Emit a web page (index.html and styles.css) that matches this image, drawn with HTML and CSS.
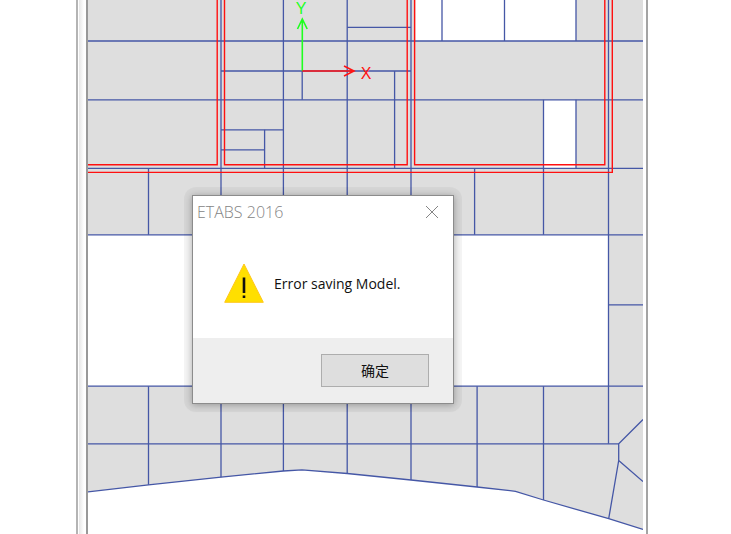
FILE: index.html
```html
<!DOCTYPE html>
<html lang="zh-CN">
<head>
<meta charset="UTF-8" />
<meta name="viewport" content="width=device-width, initial-scale=1" />
<title>ETABS 2016</title>
<link rel="stylesheet" href="styles.css">
</head>
<body>
<main class="workspace">
  <div class="splitter"></div>
  <section class="plan-view">
    <svg class="plan" viewBox="88 0 555 534" preserveAspectRatio="xMidYMin slice" aria-label="Plan view">
      <!-- slab -->
      <path class="slab" d="M88 0H643V529.5L608.7 518.7L543.5 500L515.5 491.3L477 487L411 480L347.2 473.5L302 469.8L283.3 471L221 477.2L148.5 484.8L88 491.8Z" />
      <!-- openings -->
      <path class="opening" d="M415.5 0H576V41H415.5ZM543.5 100H576V168.5H543.5ZM88 234.8H608.5V386H88Z" />
      <!-- beams -->
      <g class="beams">
        <path d="M88 41H643M88 99.8H643M88 168.4H643M88 234.8H643M88 386.2H643M88 443.8H618.7M608.5 304.8H643" />
        <path d="M347.2 27.3H411M221 71H411M221 129.8H283.3M221 149.8H264.6" />
        <path d="M221 0V234.8M283.4 0V234.8M347.2 0V234.8M411 0V234.8M608.5 0V443.8" />
        <path d="M442 0V41M504.5 0V41M576 0V41M576 99.8V168.4M543.5 99.8V234.8M302.2 71V99.8M394.6 71V168.4M264.6 129.8V168.4M148.5 168.4V234.8M474.6 168.4V234.8" />
        <path d="M148.5 386.2V484.8M221 386.2V477.2M283.4 386.2V471M347.2 386.2V473.5M411 386.2V480M477.1 386.2V487M543.5 386.2V500" />
        <path d="M88 491.8L148.5 484.8L221 477.2L283.3 471L302 469.8L347.2 473.5L411 480L477 487L515.5 491.3L543.5 500L608.7 518.7L643 529.5" />
        <path d="M643 419.5L618.7 443.8V460.5L608.7 518.7M618.7 460.5L643 481.5" />
      </g>
      <!-- walls -->
      <path class="walls" d="M88 164.8H217.2V0M224.5 0V164.8H407.2V0M414.6 0V164.8H604.8V0M88 172.4H612.3V0" />
      <!-- axes -->
      <g class="axis axis-y">
        <path d="M302.3 71V20M297.5 29L302.3 19L307.2 29" />
        <text x="301" y="14">Y</text>
      </g>
      <g class="axis axis-x">
        <path d="M302.3 71H353M344 66L354 71L344 76" />
        <text x="366" y="79">X</text>
      </g>
    </svg>

    <div class="dialog-shadow">
      <div class="dialog" role="alertdialog" aria-labelledby="dialog-title" aria-describedby="dialog-text">
        <header class="dialog-header">
          <span id="dialog-title">ETABS 2016</span>
          <button class="close-btn" type="button" aria-label="Close">
            <svg width="14" height="14" viewBox="0 0 14 14"><path d="M1 1L13 13M13 1L1 13" /></svg>
          </button>
        </header>
        <div class="dialog-body">
          <svg class="warning-icon" width="40" height="40" viewBox="0 0 40 40">
            <path class="warning-sign" d="M20 1L39.3 39.3H.7Z" />
            <path class="warning-mark" d="M18.7 14.5H21.3V30H18.7ZM18.7 32.5H21.3V35H18.7Z" />
          </svg>
          <p id="dialog-text">Error saving Model.</p>
        </div>
        <footer class="dialog-footer">
          <button class="ok-btn" type="button">确定</button>
        </footer>
      </div>
    </div>
  </section>
</main>
</body>
</html>
```

FILE: styles.css
```css
* { box-sizing: border-box; }

body {
  margin: 0;
  background: #fff;
  font-family: "Open Sans", "Noto Sans", "Noto Sans CJK SC", sans-serif;
}

.workspace {
  display: flex;
  height: 100vh;
  padding: 0 83px 0 76px;
  overflow: hidden;
}

.splitter {
  width: 10px;
  border-left: 2px solid #b4b4b4;
  background: linear-gradient(to right, #fff 1px, #e6e6e6 1px, #fff 6px);
}

.plan-view {
  flex: 1;
  position: relative;
  padding-right: 3px;
  border-left: 2px solid #999;
  border-right: 2px solid #a4a4a4;
}

/* drawing */
.plan { display: block; width: 100%; height: 100%; }
.slab { fill: #dedede; }
.opening { fill: #fff; }
.beams, .walls, .axis path { fill: none; }
.beams { stroke: #4557a6; stroke-width: 1.3; }
.walls { stroke: #ff1010; stroke-width: 1.4; }
.axis path { stroke-width: 1.6; }
.axis text { font: 16px "Liberation Sans", Arial, sans-serif; text-anchor: middle; }
.axis-y path { stroke: #1eff1e; }
.axis-y text { fill: #1eff1e; }
.axis-x path { stroke: #ff1414; }
.axis-x text { fill: #ff1414; }

/* message box */
.dialog-shadow {
  position: absolute;
  top: 187px;
  left: 96px;
  width: 278px;
  padding: 8px;
  border-radius: 12px;
  background: rgba(0, 0, 0, 0.04);
}

.dialog {
  background: #fff;
  border: 1px solid #8c8c8c;
  box-shadow: 0 1px 7px rgba(0, 0, 0, 0.3);
}

.dialog-header {
  display: flex;
  align-items: center;
  justify-content: space-between;
  height: 32px;
  padding: 0 14px 0 4px;
  color: #848484;
  font-size: 16px;
  font-weight: 300;
  line-height: 20px;
}

.close-btn {
  display: flex;
  padding: 0;
  border: none;
  background: none;
  cursor: pointer;
}
.close-btn path { stroke: #858585; }

.dialog-body {
  display: flex;
  align-items: center;
  gap: 10px;
  height: 110px;
  padding: 0 31px;
  color: #111;
  font-size: 14px;
}
.dialog-body p { margin: 0; white-space: nowrap; }

.warning-icon { flex: none; }
.warning-sign { fill: #ffdf00; stroke: #ffc61a; }
.warning-mark { fill: #111; }

.dialog-footer {
  display: flex;
  justify-content: flex-end;
  padding: 16px 24px;
  background: #eee;
}

.ok-btn {
  width: 108px;
  height: 33px;
  padding: 0 0 2px;
  border: 1px solid #adadad;
  background: #dedede;
  color: #111;
  font-family: "Noto Sans CJK SC", sans-serif;
  font-size: 14px;
  cursor: pointer;
}
```
